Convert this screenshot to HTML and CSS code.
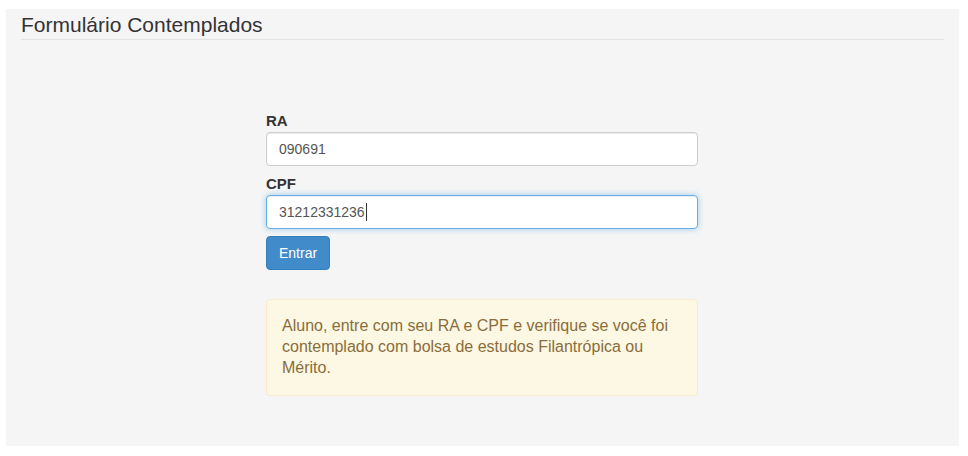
FILE: index.html
```html
<!DOCTYPE html>
<html lang="pt-BR">
<head>
<meta charset="utf-8">
<title>Formulário Contemplados</title>
<link rel="stylesheet" href="styles.css">
</head>
<body>
<div class="panel">
  <h1 class="page-title">Formulário Contemplados</h1>
  <form class="login-form">
    <div class="form-group">
      <label class="field-label" for="ra">RA</label>
      <input class="field-input" id="ra" type="text" value="090691">
    </div>
    <div class="form-group">
      <label class="field-label" for="cpf">CPF</label>
      <div class="input-wrap">
        <input class="field-input is-focused" id="cpf" type="text" value="31212331236">
        <span class="caret-mirror" aria-hidden="true">31212331236</span>
      </div>
    </div>
    <button class="btn-primary" type="button">Entrar</button>
    <div class="alert-warning">Aluno, entre com seu RA e CPF e verifique se você foi contemplado com bolsa de estudos Filantrópica ou Mérito.</div>
  </form>
</div>
</body>
</html>
```
FILE: styles.css
```css
* { box-sizing: border-box; }
html, body { margin: 0; padding: 0; background: #fff; }
body {
  padding: 9px 9px 0 6px;
  font-family: "Liberation Sans", Arial, Helvetica, sans-serif;
  color: #333;
}
.panel {
  background: #f5f5f5;
  height: 437px;
  padding: 0 15px;
}
.page-title {
  margin: 0;
  padding: 4px 0 3px;
  font-size: 21px;
  line-height: 23px;
  font-weight: normal;
  color: #333;
  border-bottom: 1px solid #e2e2e2;
}
.login-form {
  width: 432px;
  margin: 70px 0 0 245px;
}
.form-group { margin-bottom: 7px; }
.field-label {
  display: block;
  font-size: 15px;
  line-height: 22px;
  font-weight: bold;
  color: #333;
}
.input-wrap { position: relative; }
.field-input {
  display: block;
  width: 100%;
  height: 34px;
  padding: 6px 12px;
  font-family: "Liberation Sans", Arial, Helvetica, sans-serif;
  font-size: 14px;
  line-height: 20px;
  color: #555;
  background: #fff;
  border: 1px solid #ccc;
  border-radius: 4px;
  box-shadow: inset 0 1px 1px rgba(0,0,0,.075);
  outline: none;
}
.field-input.is-focused {
  border-color: #66afe9;
  box-shadow: inset 0 1px 1px rgba(0,0,0,.075), 0 0 6px rgba(102,175,233,.6);
}
.caret-mirror {
  position: absolute;
  left: 13px;
  top: 8px;
  height: 18px;
  font-size: 14px;
  line-height: 18px;
  color: transparent;
  border-right: 1px solid #333;
  padding-right: 1px;
  pointer-events: none;
}
.btn-primary {
  display: block;
  height: 34px;
  padding: 6px 12px;
  font-family: "Liberation Sans", Arial, Helvetica, sans-serif;
  font-size: 14px;
  line-height: 20px;
  color: #fff;
  background: #428bca;
  border: 1px solid #357ebd;
  border-radius: 4px;
}
.alert-warning {
  margin-top: 29px;
  padding: 15px 15px 17px;
  font-size: 16px;
  line-height: 21px;
  color: #8a6d3b;
  background: #fcf8e3;
  border: 1px solid #faebcc;
  border-radius: 4px;
}
```
